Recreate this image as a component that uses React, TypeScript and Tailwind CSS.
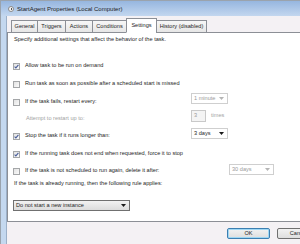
import React from 'react'

function Check({ on }: { on?: boolean }) {
  return (
    <span className="flex h-[7px] w-[7px] shrink-0 items-center justify-center border border-[#a4a6a8] bg-linear-to-br from-[#e2e2e2] to-[#fbfbfb]">
      {on && (
        <svg width="5" height="5" viewBox="0 0 5 5">
          <path d="M0.6 2.6 L1.9 3.9 L4.4 0.8" fill="none" stroke="#4a5f9a" strokeWidth="1.1" />
        </svg>
      )}
    </span>
  )
}

function Arrow({ dim }: { dim?: boolean }) {
  return (
    <svg width="5" height="3" viewBox="0 0 5 3" className="shrink-0">
      <path d="M0 0 H5 L2.5 3 Z" fill={dim ? '#b5b5b5' : '#1a1a1a'} />
    </svg>
  )
}

function Combo({ label, dim, w }: { label: string; dim?: boolean; w: string }) {
  return (
    <div
      className={`flex h-[11px] ${w} shrink-0 items-center justify-between border border-[#cfcfcf] bg-white pl-[2px] pr-[3px] ${dim ? 'text-[#9a9a9a]' : 'text-[#1e1e1e]'}`}
    >
      <span>{label}</span>
      <Arrow dim={dim} />
    </div>
  )
}

function Row({ on, label, h, children }: { on?: boolean; label: string; h: string; children?: React.ReactNode }) {
  return (
    <div className={`flex ${h} items-center`}>
      <Check on={on} />
      <span className="ml-[5px] whitespace-nowrap">{label}</span>
      {children}
    </div>
  )
}

const tabs = ['General', 'Triggers', 'Actions', 'Conditions', 'Settings', 'History (disabled)']
const tabW = ['w-[27px]', 'w-[29px]', 'w-[28px]', 'w-[35px]', 'w-[31px]', 'w-[51px]']

export default function App() {
  return (
    <div className="flex h-[244px] w-[300px] flex-col overflow-hidden border-l border-t border-[#9aa3ad] bg-[#c3d6ee] font-['Liberation_Sans',Arial,sans-serif] text-[5.6px] leading-none text-[#1e1e1e]">
      {/* Title bar */}
      <div className="flex h-[15px] shrink-0 items-center bg-linear-to-b from-[#96b6df] to-[#c3d7ef] pl-[7px]">
        <span className="flex h-[6px] w-[6px] items-center justify-center rounded-full border border-[#8a8a8a] bg-[#f4f4f4]">
          <span className="h-[2px] w-[1px] bg-[#555]" />
        </span>
        <span className="ml-[3px] text-[6px] text-[#1b1b1b]">StartAgent Properties (Local Computer)</span>
      </div>

      <div className="flex flex-1">
        {/* Left frame */}
        <div className="w-[6px] shrink-0 border-r border-[#9cb0c8] bg-[#c4d8ef]" />

        {/* Client area */}
        <div className="flex w-[320px] shrink-0 flex-col bg-[#f4f1f4]">
          {/* Tabs */}
          <div className="relative z-10 -mb-px flex h-[17px] items-end pl-[4px]">
            {tabs.map((t, i) => {
              const sel = t === 'Settings'
              return (
                <div
                  key={t}
                  className={`-ml-px flex ${tabW[i]} shrink-0 items-center justify-center border border-[#8c8f96] first:ml-0 ${
                    sel ? 'h-[15px] border-b-white bg-white' : 'h-[13px] bg-linear-to-b from-[#f7f7f7] to-[#e6e6e6]'
                  }`}
                >
                  {t}
                </div>
              )
            })}
          </div>

          {/* Panel */}
          <div className="flex h-[190px] flex-col border border-[#8c8f96] bg-white pl-[5px]">
            <div className="flex h-[10px] items-center pl-[1px] pt-[3px]">
              Specify additional settings that affect the behavior of the task.
            </div>
            <div className="h-[14px]" />
            <Row on label="Allow task to be run on demand" h="h-[18px]" />
            <Row label="Run task as soon as possible after a scheduled start is missed" h="h-[18px]" />
            <div className="flex h-[18px] items-center">
              <Check />
              <span className="ml-[5px] w-[166px] shrink-0 whitespace-nowrap">If the task fails, restart every:</span>
              <div className="-mt-[7px]">
                <Combo label="1 minute" dim w="w-[37px]" />
              </div>
            </div>
            <div className="flex h-[16px] items-center">
              <span className="ml-[13px] w-[165px] shrink-0 text-[#a3a3a3]">Attempt to restart up to:</span>
              <div className="-mt-[6px] flex items-center">
                <div className="flex h-[12px] w-[15px] items-center border border-[#c9c9c9] bg-[#f4f4f4] pl-[2px] text-[#9a9a9a]">3</div>
                <span className="ml-[5px] text-[#a3a3a3]">times</span>
              </div>
            </div>
            <div className="flex h-[18px] items-center">
              <Check on />
              <span className="ml-[5px] w-[166px] shrink-0 whitespace-nowrap">Stop the task if it runs longer than:</span>
              <div className="-mt-[5px]">
                <Combo label="3 days" w="w-[37px]" />
              </div>
            </div>
            <Row on label="If the running task does not end when requested, force it to stop" h="h-[18px]" />
            <div className="flex h-[16px] items-center">
              <Check />
              <span className="ml-[5px] w-[204px] shrink-0 whitespace-nowrap">If the task is not scheduled to run again, delete it after:</span>
              <div className="-mt-[3px]">
                <Combo label="30 days" dim w="w-[45px]" />
              </div>
            </div>
            <div className="flex h-[10px] items-center pl-[1px]">
              If the task is already running, then the following rule applies:
            </div>
            <div className="mt-[11px] flex h-[11px] w-[117px] items-center justify-between border border-[#707070] bg-linear-to-b from-[#f2f2f2] to-[#dcdcdc] pl-[2px] pr-[3px]">
              <span>Do not start a new instance</span>
              <Arrow />
            </div>
          </div>

          {/* Buttons */}
          <div className="flex gap-[7px] pl-[220px] pt-[6px]">
            <div className="flex h-[11px] w-[43px] items-center justify-center rounded-[2px] border border-[#3c7fb1] bg-linear-to-b from-[#f2f2f2] to-[#dedede] shadow-[inset_0_0_0_1px_#9fd7f4]">
              OK
            </div>
            <div className="flex h-[11px] w-[43px] items-center justify-center rounded-[2px] border border-[#707070] bg-linear-to-b from-[#f2f2f2] to-[#dedede]">
              Cancel
            </div>
          </div>
        </div>
      </div>
    </div>
  )
}
